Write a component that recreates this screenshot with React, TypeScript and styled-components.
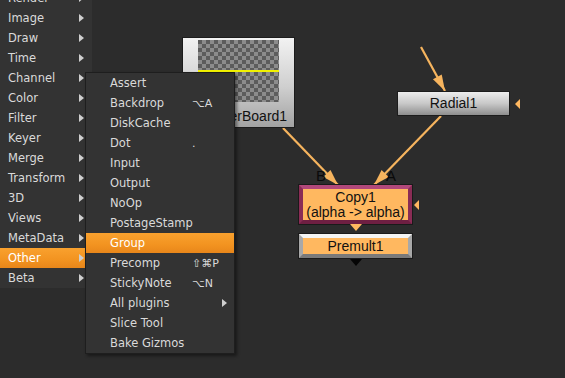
import styled, { createGlobalStyle } from 'styled-components'

const GlobalStyle = createGlobalStyle`
  html, body {
    margin: 0;
    padding: 0;
    background: #2c2c2c;
    overflow: hidden;
  }
`

const Canvas = styled.div`
  position: relative;
  width: 565px;
  height: 378px;
  background: #2c2c2c;
  overflow: hidden;
  font-family: 'Liberation Sans', Arial, sans-serif;
`

const Edges = styled.svg`
  position: absolute;
  left: 0;
  top: 0;
`

const Node = styled.div<{ $x: number; $y: number; $w: number; $h: number }>`
  position: absolute;
  left: ${(p) => p.$x}px;
  top: ${(p) => p.$y}px;
  width: ${(p) => p.$w}px;
  height: ${(p) => p.$h}px;
  box-sizing: border-box;
  display: flex;
  flex-direction: column;
  align-items: center;
  justify-content: center;
  color: #111;
  font-size: 14px;
  line-height: 15px;
`

const GrayNode = styled(Node)`
  border: 1px solid #1c1c1c;
  background: linear-gradient(#ededed, #c8c8c8 50%, #8e8e8e);
`

const ReadNode = styled(GrayNode)`
  justify-content: flex-start;
  padding-top: 2px;
  gap: 7px;
  background: linear-gradient(#f2f2f2, #cfcfcf 55%, #a2a2a2);
`

const Thumb = styled.div`
  position: relative;
  width: 81px;
  height: 62px;
  background: repeating-conic-gradient(#8c8c8c 0 25%, #5c5c5c 0 50%) 0 0 / 8px 8px;
`

const YellowLine = styled.div`
  position: absolute;
  left: 0;
  right: 0;
  top: 30px;
  height: 2px;
  background: #f2f200;
`

const OrangeNode = styled(Node)<{ $frame: 'selected' | 'plain' }>`
  border: 4px solid;
  border-color: ${(p) =>
    p.$frame === 'selected' ? '#b2487a #8a2c55 #6e1f42 #8a2c55' : '#f4f4f4 #a8a8a8 #7a7a7a #a8a8a8'};
  background: #ffb860;
  box-shadow: 0 0 0 1px #1a1a1a;
`

const InputLabel = styled.span<{ $x: number }>`
  position: absolute;
  z-index: 2;
  left: ${(p) => p.$x}px;
  top: -22px;
  font-size: 15px;
  line-height: 17px;
  color: #0a0a0a;
`

/* small connector triangles hanging off a node */
const Pin = styled.div<{ $at: 'right' | 'below' | 'under'; $color: string }>`
  position: absolute;
  width: 0;
  height: 0;
  ${(p) =>
    p.$at === 'right'
      ? `right: -11px; top: 50%; margin-top: -5px;
         border-top: 5px solid transparent; border-bottom: 5px solid transparent;
         border-right: 5px solid ${p.$color};`
      : `left: 50%; margin-left: -6px; bottom: ${p.$at === 'below' ? -11 : -12}px;
         border-left: 6px solid transparent; border-right: 6px solid transparent;
         border-top: 7px solid ${p.$color};`}
`

/* menus */

const Menu = styled.div<{ $x: number; $y: number; $w: number }>`
  position: absolute;
  left: ${(p) => p.$x}px;
  top: ${(p) => p.$y}px;
  width: ${(p) => p.$w}px;
  display: flex;
  flex-direction: column;
  background: #333333;
  box-sizing: border-box;
  font-family: 'DejaVu Sans', Verdana, sans-serif;
  font-size: 11.5px;
`

const SubMenu = styled(Menu)`
  border: 1px solid #1e1e1e;
  box-shadow: 2px 2px 3px rgba(0, 0, 0, 0.45);
`

const Row = styled.div<{ $active?: boolean; $indent: number }>`
  position: relative;
  height: 20px;
  display: flex;
  align-items: center;
  padding-left: ${(p) => p.$indent}px;
  color: ${(p) => (p.$active ? '#ffffff' : '#dadada')};
  background: ${(p) => (p.$active ? 'linear-gradient(#f9a12e, #f29320 60%, #e8861a)' : 'transparent')};
  white-space: nowrap;
`

const Shortcut = styled.span`
  position: absolute;
  left: 106px;
  font-size: 11px;
`

const Arrow = styled.span<{ $x: number }>`
  position: absolute;
  left: ${(p) => p.$x}px;
  top: 6px;
  width: 0;
  height: 0;
  border-top: 4px solid transparent;
  border-bottom: 4px solid transparent;
  border-left: 5px solid #cfcfcf;
`

const mainItems = [
  'Render', 'Image', 'Draw', 'Time', 'Channel', 'Color', 'Filter', 'Keyer',
  'Merge', 'Transform', '3D', 'Views', 'MetaData', 'Other', 'Beta',
]

const otherItems: { name: string; key?: string; sub?: boolean }[] = [
  { name: 'Assert' },
  { name: 'Backdrop', key: '⌥A' },
  { name: 'DiskCache' },
  { name: 'Dot', key: '.' },
  { name: 'Input' },
  { name: 'Output' },
  { name: 'NoOp' },
  { name: 'PostageStamp' },
  { name: 'Group' },
  { name: 'Precomp', key: '⇧⌘P' },
  { name: 'StickyNote', key: '⌥N' },
  { name: 'All plugins', sub: true },
  { name: 'Slice Tool' },
  { name: 'Bake Gizmos' },
]

const EDGE = '#f6b45e'
const NODE_ORANGE = '#ffb860'

function arrowHead(x1: number, y1: number, x2: number, y2: number, len = 16, half = 5) {
  const dx = x2 - x1
  const dy = y2 - y1
  const d = Math.hypot(dx, dy)
  const ux = dx / d
  const uy = dy / d
  const bx = x2 - ux * len
  const by = y2 - uy * len
  const px = -uy * half
  const py = ux * half
  return `${x2},${y2} ${bx + px},${by + py} ${bx - px},${by - py}`
}

const edges = [
  { x1: 421, y1: 47, x2: 445, y2: 91 },
  { x1: 283, y1: 128, x2: 338, y2: 185 },
  { x1: 441, y1: 116, x2: 374, y2: 185 },
]

export default function App() {
  return (
    <Canvas>
      <GlobalStyle />
      <Edges width={565} height={378}>
        {edges.map((e, i) => (
          <g key={i}>
            <line x1={e.x1} y1={e.y1} x2={e.x2} y2={e.y2} stroke={EDGE} strokeWidth={2.2} />
            <polygon points={arrowHead(e.x1, e.y1, e.x2, e.y2)} fill={EDGE} />
          </g>
        ))}
      </Edges>

      <ReadNode $x={182} $y={37} $w={113} $h={91}>
        <Thumb>
          <YellowLine />
        </Thumb>
        <span>CheckerBoard1</span>
      </ReadNode>

      <GrayNode $x={397} $y={91} $w={113} $h={25}>
        Radial1
        <Pin $at="right" $color={NODE_ORANGE} />
      </GrayNode>

      <OrangeNode $frame="selected" $x={299} $y={185} $w={113} $h={39}>
        <InputLabel $x={13}>B</InputLabel>
        <InputLabel $x={83}>A</InputLabel>
        <span>Copy1</span>
        <span>(alpha -&gt; alpha)</span>
        <Pin $at="right" $color={NODE_ORANGE} />
        <Pin $at="below" $color={NODE_ORANGE} />
      </OrangeNode>

      <OrangeNode $frame="plain" $x={299} $y={234} $w={113} $h={24}>
        Premult1
        <Pin $at="under" $color="#050505" />
      </OrangeNode>

      <Menu $x={0} $y={-12} $w={92}>
        {mainItems.map((m) => (
          <Row key={m} $indent={8} $active={m === 'Other'}>
            {m}
            <Arrow $x={79} />
          </Row>
        ))}
      </Menu>

      <SubMenu $x={85} $y={72} $w={150}>
        {otherItems.map((it) => (
          <Row key={it.name} $indent={24} $active={it.name === 'Group'}>
            {it.name}
            {it.key && <Shortcut>{it.key}</Shortcut>}
            {it.sub && <Arrow $x={136} />}
          </Row>
        ))}
      </SubMenu>
    </Canvas>
  )
}
